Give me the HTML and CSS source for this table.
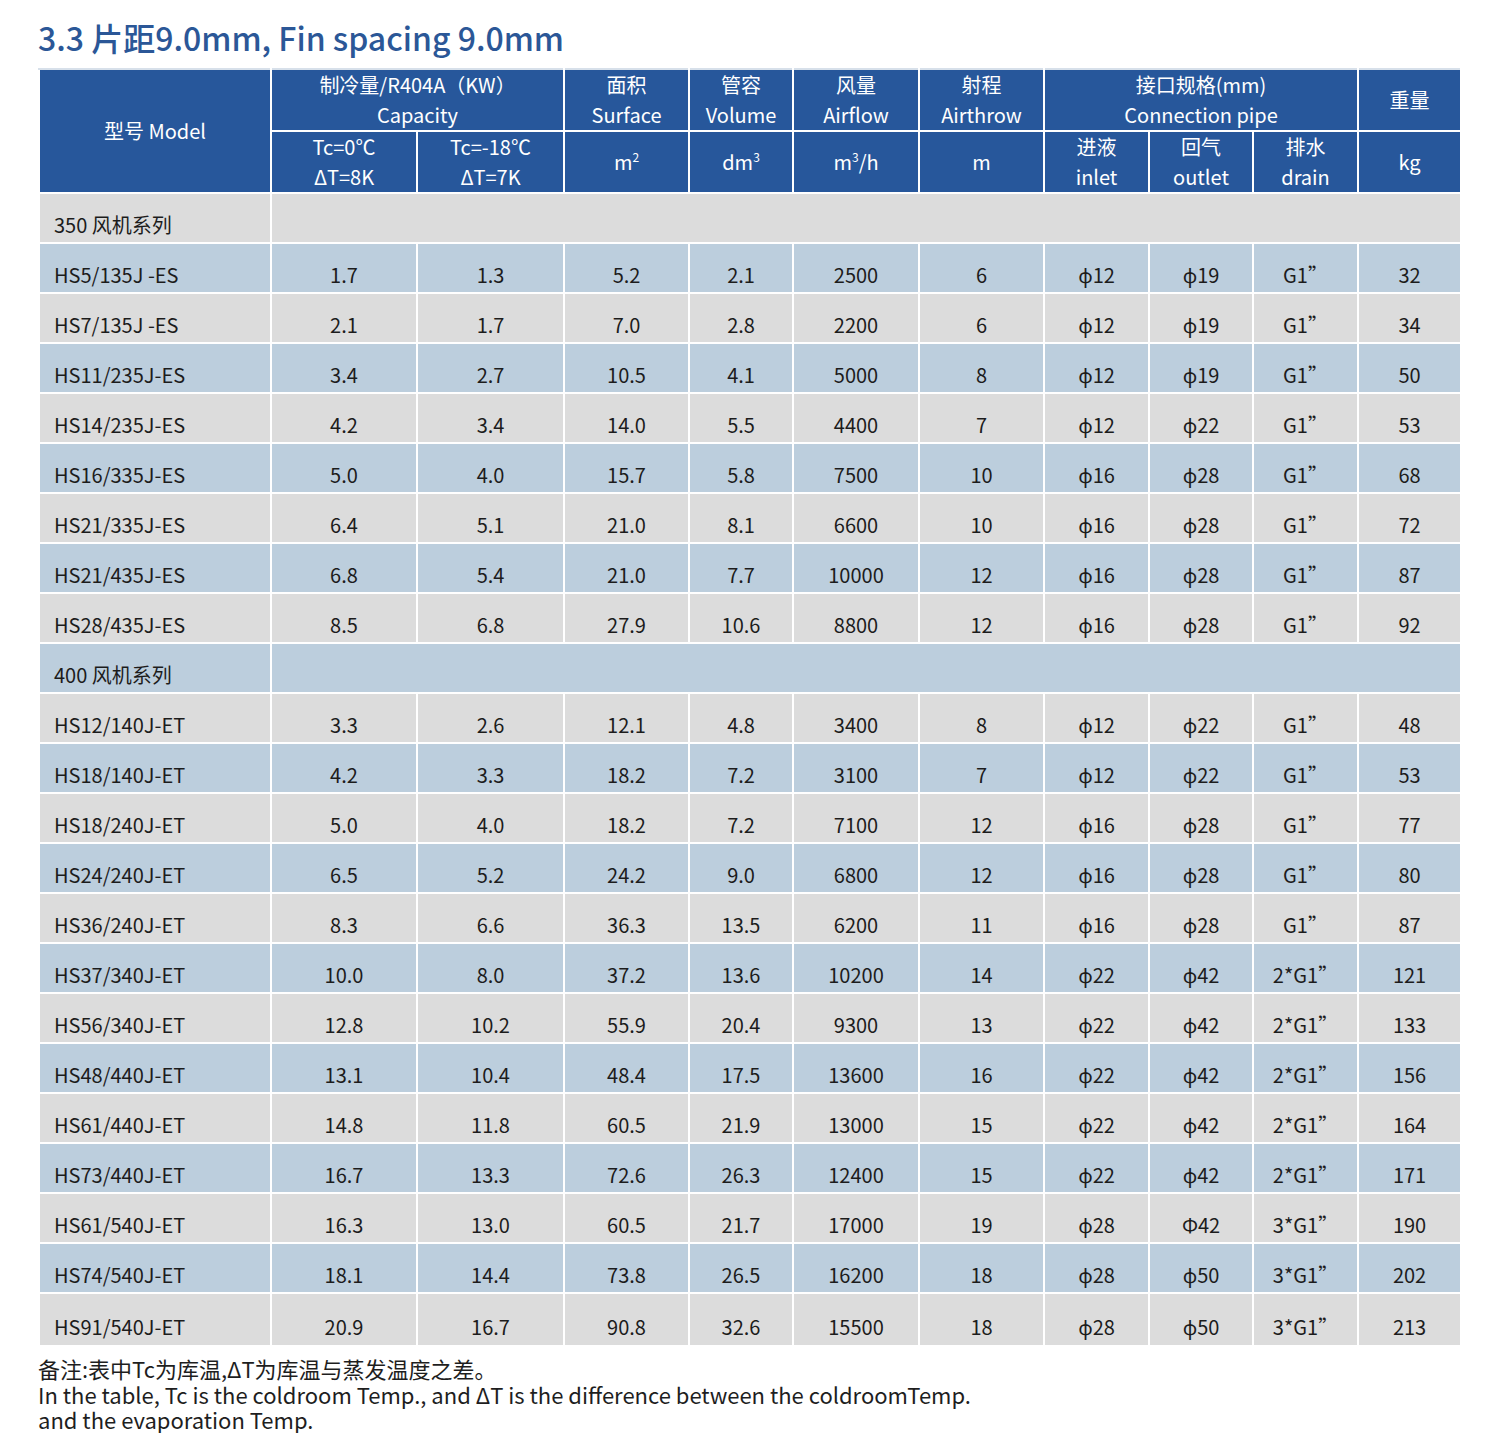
FILE: index.html
```html
<!DOCTYPE html>
<html lang="zh-CN">
<head>
<meta charset="utf-8">
<title>Fin spacing 9.0mm</title>
<link rel="stylesheet" href="styles.css">
</head>
<body>
<div class="page">
  <h1 class="title">3.3 片距9.0mm, Fin spacing 9.0mm</h1>
  <table class="spec">
    <colgroup>
      <col class="c-model"><col class="c-cap1"><col class="c-cap2"><col class="c-surf"><col class="c-vol"><col class="c-air"><col class="c-throw"><col class="c-in"><col class="c-out"><col class="c-drain"><col class="c-kg">
    </colgroup>
    <thead>
      <tr class="h1">
        <th rowspan="2">型号 Model</th>
        <th colspan="2">制冷量/R404A（KW）<br>Capacity</th>
        <th>面积<br>Surface</th>
        <th>管容<br>Volume</th>
        <th>风量<br>Airflow</th>
        <th>射程<br>Airthrow</th>
        <th colspan="3">接口规格(mm)<br>Connection pipe</th>
        <th>重量</th>
      </tr>
      <tr class="h2">
        <th>Tc=0℃<br>ΔT=8K</th>
        <th>Tc=-18℃<br>ΔT=7K</th>
        <th>m<sup>2</sup></th>
        <th>dm<sup>3</sup></th>
        <th>m<sup>3</sup>/h</th>
        <th>m</th>
        <th>进液<br>inlet</th>
        <th>回气<br>outlet</th>
        <th>排水<br>drain</th>
        <th>kg</th>
      </tr>
    </thead>
    <tbody>
      <tr class="g sec"><td class="m">350 风机系列</td><td colspan="10"></td></tr>
      <tr class="b"><td class="m">HS5/135J -ES</td><td>1.7</td><td>1.3</td><td>5.2</td><td>2.1</td><td>2500</td><td>6</td><td>ϕ12</td><td>ϕ19</td><td>G1”</td><td>32</td></tr>
      <tr class="g"><td class="m">HS7/135J -ES</td><td>2.1</td><td>1.7</td><td>7.0</td><td>2.8</td><td>2200</td><td>6</td><td>ϕ12</td><td>ϕ19</td><td>G1”</td><td>34</td></tr>
      <tr class="b"><td class="m">HS11/235J-ES</td><td>3.4</td><td>2.7</td><td>10.5</td><td>4.1</td><td>5000</td><td>8</td><td>ϕ12</td><td>ϕ19</td><td>G1”</td><td>50</td></tr>
      <tr class="g"><td class="m">HS14/235J-ES</td><td>4.2</td><td>3.4</td><td>14.0</td><td>5.5</td><td>4400</td><td>7</td><td>ϕ12</td><td>ϕ22</td><td>G1”</td><td>53</td></tr>
      <tr class="b"><td class="m">HS16/335J-ES</td><td>5.0</td><td>4.0</td><td>15.7</td><td>5.8</td><td>7500</td><td>10</td><td>ϕ16</td><td>ϕ28</td><td>G1”</td><td>68</td></tr>
      <tr class="g"><td class="m">HS21/335J-ES</td><td>6.4</td><td>5.1</td><td>21.0</td><td>8.1</td><td>6600</td><td>10</td><td>ϕ16</td><td>ϕ28</td><td>G1”</td><td>72</td></tr>
      <tr class="b"><td class="m">HS21/435J-ES</td><td>6.8</td><td>5.4</td><td>21.0</td><td>7.7</td><td>10000</td><td>12</td><td>ϕ16</td><td>ϕ28</td><td>G1”</td><td>87</td></tr>
      <tr class="g"><td class="m">HS28/435J-ES</td><td>8.5</td><td>6.8</td><td>27.9</td><td>10.6</td><td>8800</td><td>12</td><td>ϕ16</td><td>ϕ28</td><td>G1”</td><td>92</td></tr>
      <tr class="b sec"><td class="m">400 风机系列</td><td colspan="10"></td></tr>
      <tr class="g"><td class="m">HS12/140J-ET</td><td>3.3</td><td>2.6</td><td>12.1</td><td>4.8</td><td>3400</td><td>8</td><td>ϕ12</td><td>ϕ22</td><td>G1”</td><td>48</td></tr>
      <tr class="b"><td class="m">HS18/140J-ET</td><td>4.2</td><td>3.3</td><td>18.2</td><td>7.2</td><td>3100</td><td>7</td><td>ϕ12</td><td>ϕ22</td><td>G1”</td><td>53</td></tr>
      <tr class="g"><td class="m">HS18/240J-ET</td><td>5.0</td><td>4.0</td><td>18.2</td><td>7.2</td><td>7100</td><td>12</td><td>ϕ16</td><td>ϕ28</td><td>G1”</td><td>77</td></tr>
      <tr class="b"><td class="m">HS24/240J-ET</td><td>6.5</td><td>5.2</td><td>24.2</td><td>9.0</td><td>6800</td><td>12</td><td>ϕ16</td><td>ϕ28</td><td>G1”</td><td>80</td></tr>
      <tr class="g"><td class="m">HS36/240J-ET</td><td>8.3</td><td>6.6</td><td>36.3</td><td>13.5</td><td>6200</td><td>11</td><td>ϕ16</td><td>ϕ28</td><td>G1”</td><td>87</td></tr>
      <tr class="b"><td class="m">HS37/340J-ET</td><td>10.0</td><td>8.0</td><td>37.2</td><td>13.6</td><td>10200</td><td>14</td><td>ϕ22</td><td>ϕ42</td><td>2*G1”</td><td>121</td></tr>
      <tr class="g"><td class="m">HS56/340J-ET</td><td>12.8</td><td>10.2</td><td>55.9</td><td>20.4</td><td>9300</td><td>13</td><td>ϕ22</td><td>ϕ42</td><td>2*G1”</td><td>133</td></tr>
      <tr class="b"><td class="m">HS48/440J-ET</td><td>13.1</td><td>10.4</td><td>48.4</td><td>17.5</td><td>13600</td><td>16</td><td>ϕ22</td><td>ϕ42</td><td>2*G1”</td><td>156</td></tr>
      <tr class="g"><td class="m">HS61/440J-ET</td><td>14.8</td><td>11.8</td><td>60.5</td><td>21.9</td><td>13000</td><td>15</td><td>ϕ22</td><td>ϕ42</td><td>2*G1”</td><td>164</td></tr>
      <tr class="b"><td class="m">HS73/440J-ET</td><td>16.7</td><td>13.3</td><td>72.6</td><td>26.3</td><td>12400</td><td>15</td><td>ϕ22</td><td>ϕ42</td><td>2*G1”</td><td>171</td></tr>
      <tr class="g"><td class="m">HS61/540J-ET</td><td>16.3</td><td>13.0</td><td>60.5</td><td>21.7</td><td>17000</td><td>19</td><td>ϕ28</td><td>Φ42</td><td>3*G1”</td><td>190</td></tr>
      <tr class="b"><td class="m">HS74/540J-ET</td><td>18.1</td><td>14.4</td><td>73.8</td><td>26.5</td><td>16200</td><td>18</td><td>ϕ28</td><td>ϕ50</td><td>3*G1”</td><td>202</td></tr>
      <tr class="g"><td class="m">HS91/540J-ET</td><td>20.9</td><td>16.7</td><td>90.8</td><td>32.6</td><td>15500</td><td>18</td><td>ϕ28</td><td>ϕ50</td><td>3*G1”</td><td>213</td></tr>
    </tbody>
  </table>
  <div class="note">
    <p>备注:表中Tc为库温,ΔT为库温与蒸发温度之差。</p>
    <p>In the table, Tc is the coldroom Temp., and ΔT is the difference between the coldroomTemp.</p>
    <p>and the evaporation Temp.</p>
  </div>
</div>
</body>
</html>
```

FILE: styles.css
```css
html, body {
  margin: 0;
  padding: 0;
  background: #ffffff;
}
body {
  font-family: "Noto Sans CJK SC", "Noto Sans", sans-serif;
  color: #1e1e1e;
}
.page {
  padding: 14px 36px 0 38px;
}
.title {
  margin: 0 0 8px 0;
  font-size: 32px;
  font-weight: 500;
  line-height: 46px;
  color: #2b5797;
}
.spec {
  border-collapse: collapse;
  table-layout: fixed;
  width: 1422px;
}
.c-model { width: 232px; }
.c-cap1 { width: 146px; }
.c-cap2 { width: 147px; }
.c-surf { width: 125px; }
.c-vol { width: 104px; }
.c-air { width: 126px; }
.c-throw { width: 125px; }
.c-in { width: 105px; }
.c-out { width: 104px; }
.c-drain { width: 105px; }
.c-kg { width: 103px; }
.spec th, .spec td {
  border: 2px solid #ffffff;
  padding: 0;
  text-align: center;
  font-size: 20px;
}
.spec thead th {
  background: #27579b;
  color: #ffffff;
  font-weight: 400;
  line-height: 30px;
  height: 58px;
}
.spec thead tr.h1 th {
  border-top-color: #d7e0ea;
}
.spec sup {
  font-size: 12px;
  vertical-align: 8px;
  line-height: 0;
}
.spec tbody td {
  height: 50px;
  padding-top: 14px;
  box-sizing: border-box;
  line-height: 28px;
  color: #1c1c1c;
}
.spec tbody tr:last-child td {
  height: 53px;
  padding-top: 15px;
}
.spec tbody td.m {
  text-align: left;
  padding-left: 14px;
}
.spec tr.g td { background: #dcdcdc; }
.spec tr.b td { background: #bccedd; }
.note {
  margin-top: 9px;
  font-size: 22px;
  line-height: 25.5px;
  color: #1e1e1e;
}
.note p {
  margin: 0;
}
```
